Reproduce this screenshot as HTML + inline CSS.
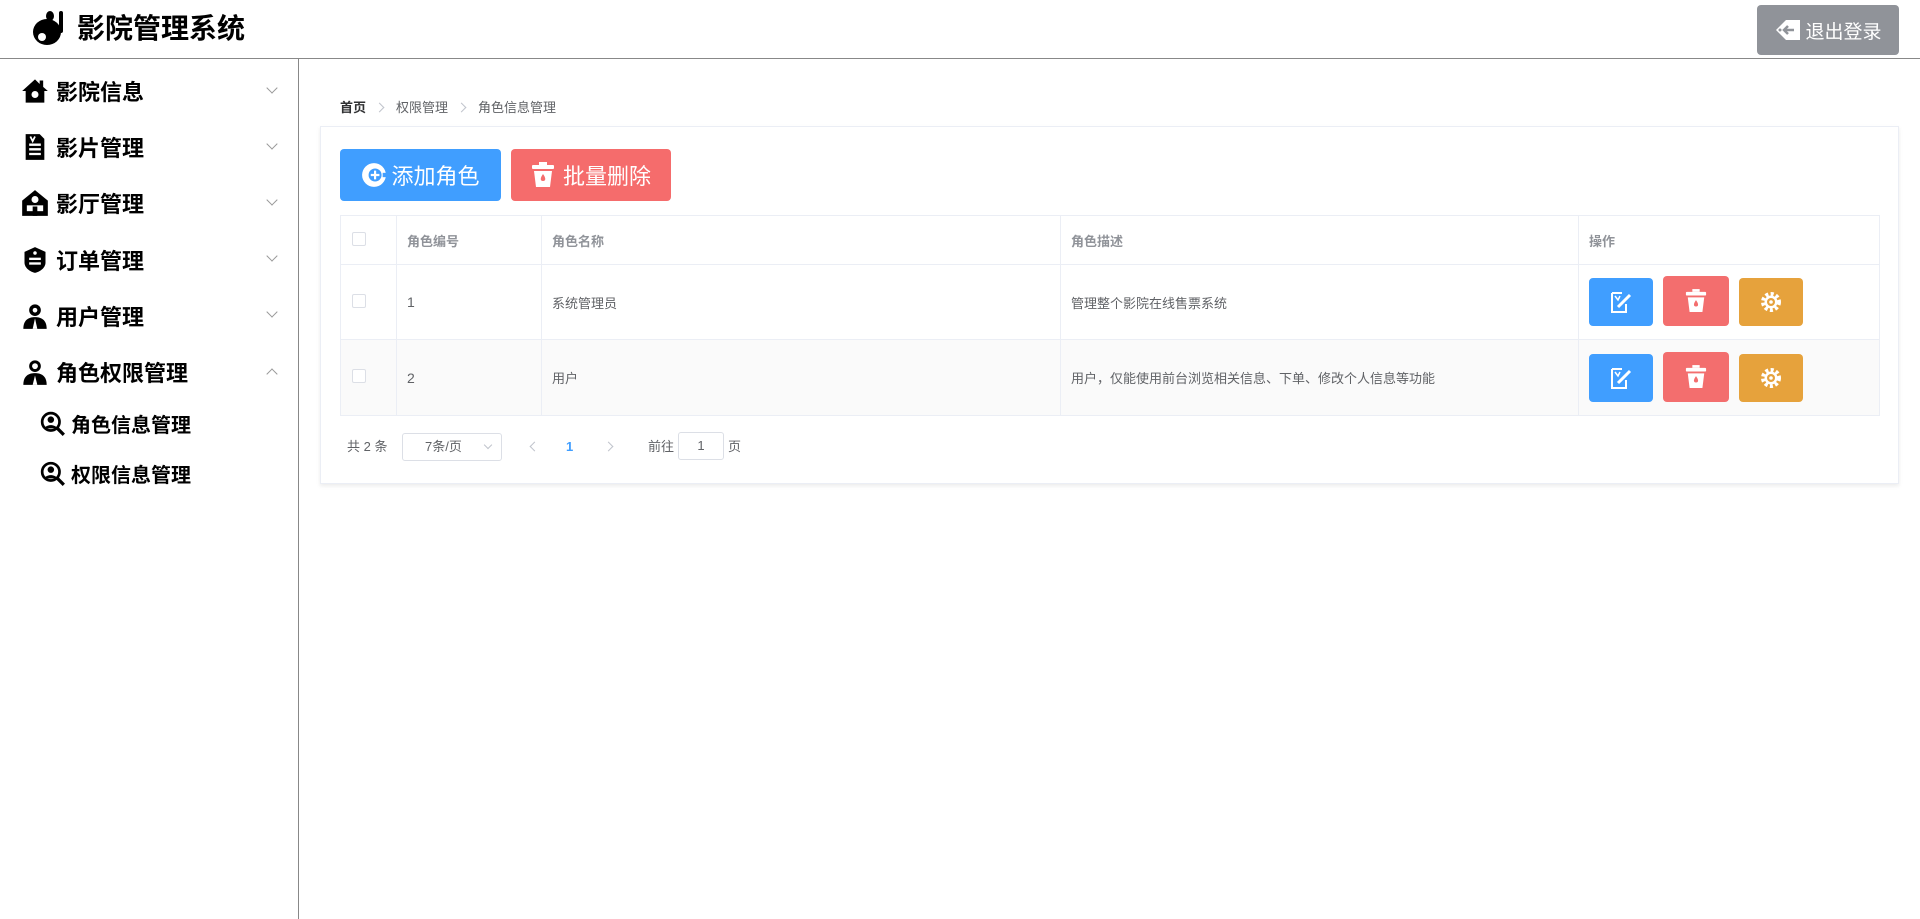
<!DOCTYPE html>
<html><head><meta charset="utf-8"><style>
*{margin:0;padding:0;box-sizing:border-box}
body{width:1920px;height:919px;overflow:hidden;background:#fff;font-family:"Liberation Sans","Noto Sans CJK SC",sans-serif;color:#606266;position:relative}
.abs{position:absolute}
.hdr{left:0;top:0;width:1920px;height:59px;border-bottom:1px solid #888}
.side{left:0;top:59px;width:299px;height:860px;border-right:1px solid #888}
.mi{position:absolute;left:21px;font-size:22px;font-weight:bold;color:#000;display:flex;align-items:center;height:30px}
.mi svg{width:28px;height:28px;margin-right:7px}
.chev{position:absolute;left:268px;width:8px;height:8px;border-right:1px solid #999;border-bottom:1px solid #999;transform:rotate(45deg)}
.si{position:absolute;left:40px;font-size:20px;font-weight:bold;color:#000;display:flex;align-items:center}
.si svg{width:26px;height:26px;margin-right:5px}
.btn{position:absolute;border-radius:4px;color:#fff;display:flex;align-items:center;justify-content:center}
td,th{border-right:1px solid #ebeef5;border-bottom:1px solid #ebeef5}
.cb{display:inline-block;width:14px;height:14px;border:1px solid #dcdfe6;border-radius:2px;background:#fff}
.sep{display:inline-block;width:7px;height:7px;border-right:1px solid #c0c4cc;border-top:1px solid #c0c4cc;transform:rotate(45deg);margin:0 13px 1px 10px}
.ar{position:absolute;width:7px;height:7px;border-left:1.5px solid #c0c4cc;border-bottom:1.5px solid #c0c4cc}
</style></head><body>
<div class="abs hdr">
 <svg class="abs" style="left:31px;top:10px" width="38" height="36" viewBox="0 0 38 36"><ellipse cx="16" cy="22" rx="14" ry="13" fill="#000"/><circle cx="11" cy="27" r="4" fill="#fff"/><ellipse cx="19" cy="6" rx="4" ry="5" fill="#000"/><rect x="28" y="1" width="4" height="22" rx="2" fill="#000"/></svg>
 <div class="abs" style="left:77px;top:10px;font-size:28px;font-weight:bold;color:#000;line-height:38px">影院管理系统</div>
 <div class="btn" style="left:1757px;top:5px;width:142px;height:50px;background:#909399;font-size:19px">
  <svg width="28" height="24" viewBox="0 0 28 24" style="margin-right:3px"><path d="M2 12 L12 2 H26 V22 H12 Z" fill="#fff"/><path d="M20 12 H10 M14 8 L10 12 L14 16" stroke="#909399" stroke-width="2.5" fill="none"/><circle cx="6" cy="12" r="1.5" fill="#909399"/></svg>退出登录</div>
</div>
<div class="abs side">
 <div class="mi" style="top:17px"><svg viewBox="0 0 24 24"><path d="M12 2 L1 12 H4 V22 H20 V12 H23 L19 8.5 V3 H16 V6 Z" fill="#000"/><circle cx="12" cy="15" r="3" fill="#fff"/></svg>影院信息</div><div class="chev" style="top:25px"></div>
 <div class="mi" style="top:73px"><svg viewBox="0 0 24 24"><path d="M4 1 H16 L20 5 V23 H4 Z" fill="#000"/><path d="M7 10 H17 M7 14 H17 M7 18 H17" stroke="#fff" stroke-width="2"/><path d="M8 3 L10 7 L12 3" stroke="#fff" stroke-width="1.5" fill="none"/></svg>影片管理</div><div class="chev" style="top:81px"></div>
 <div class="mi" style="top:129px"><svg viewBox="0 0 24 24"><path d="M12 1 L1 10 V23 H23 V10 Z" fill="#000"/><circle cx="12" cy="9" r="3" fill="#fff"/><rect x="5" y="14" width="14" height="5" fill="#fff"/><rect x="10" y="15" width="4" height="8" fill="#000"/></svg>影厅管理</div><div class="chev" style="top:137px"></div>
 <div class="mi" style="top:186px"><svg viewBox="0 0 24 24"><path d="M12 1 L21 5 V14 C21 19 16 22 12 23 C8 22 3 19 3 14 V5 Z" fill="#000"/><rect x="7" y="10" width="10" height="2" fill="#fff"/><rect x="7" y="14" width="10" height="2" fill="#fff"/><circle cx="12" cy="6" r="1.5" fill="#fff"/></svg>订单管理</div><div class="chev" style="top:193px"></div>
 <div class="mi" style="top:242px"><svg viewBox="0 0 24 24"><circle cx="12" cy="7" r="5" fill="#000"/><circle cx="12" cy="7" r="2" fill="#fff"/><path d="M2 23 C2 15 7 13 12 13 C17 13 22 15 22 23 Z" fill="#000"/><path d="M12 14 L10 23 H14 Z" fill="#fff"/></svg>用户管理</div><div class="chev" style="top:249px"></div>
 <div class="mi" style="top:298px"><svg viewBox="0 0 24 24"><circle cx="12" cy="7" r="5" fill="#000"/><circle cx="12" cy="7" r="2.5" fill="#fff"/><path d="M2 23 C2 15 7 13 12 13 C17 13 22 15 22 23 Z" fill="#000"/><path d="M12 15 L10 23 H14 Z" fill="#fff"/></svg>角色权限管理</div><div class="chev" style="top:311px;transform:rotate(225deg)"></div>
 <div class="si" style="top:350px"><svg viewBox="0 0 24 24"><circle cx="10" cy="10" r="8" fill="none" stroke="#000" stroke-width="2.5"/><circle cx="10" cy="8" r="3" fill="#000"/><path d="M4 16 C6 12 14 12 16 16" fill="#000"/><path d="M16 16 L22 22" stroke="#000" stroke-width="3"/></svg>角色信息管理</div>
 <div class="si" style="top:400px"><svg viewBox="0 0 24 24"><circle cx="10" cy="10" r="8" fill="none" stroke="#000" stroke-width="2.5"/><circle cx="10" cy="8" r="3" fill="#000"/><path d="M4 16 C6 12 14 12 16 16" fill="#000"/><path d="M16 16 L22 22" stroke="#000" stroke-width="3"/></svg>权限信息管理</div>
</div>
<div class="abs" style="left:340px;top:99px;font-size:13px;color:#606266;line-height:18px"><b style="color:#303133">首页</b><span class="sep"></span>权限管理<span class="sep"></span>角色信息管理</div>
<div class="abs" style="left:320px;top:126px;width:1579px;height:358px;border:1px solid #ebeef5;box-shadow:0 2px 4px rgba(0,0,0,.08)"></div>
<div class="btn" style="left:340px;top:149px;width:161px;height:52px;background:#409eff;font-size:22px"><svg width="26" height="26" viewBox="0 0 24 24" style="margin-right:4px"><circle cx="12" cy="12" r="11" fill="#fff"/><circle cx="13" cy="12" r="6" fill="#409eff"/><path d="M13 8 V16 M9 12 H17" stroke="#fff" stroke-width="2"/><rect x="20" y="10" width="4" height="4" fill="#409eff"/></svg>添加角色</div>
<div class="btn" style="left:511px;top:149px;width:160px;height:52px;background:#f56c6c;font-size:22px"><svg width="24" height="26" viewBox="0 0 24 26" style="margin-right:8px"><rect x="8" y="0" width="8" height="3" fill="#fff"/><rect x="1" y="3" width="22" height="4" rx="1" fill="#fff"/><path d="M3 9 H21 L19 25 H5 Z" fill="#fff"/><path d="M12 12 C9 16 9 19 12 19 C15 19 15 16 12 12Z" fill="#f56c6c"/></svg>批量删除</div>
<table class="abs" style="left:340px;top:215px;width:1540px;border-collapse:collapse;border-top:1px solid #ebeef5;border-left:1px solid #ebeef5;font-size:13px">
<tr style="height:49px;color:#909399;text-align:left"><th style="width:56px;padding-left:11px;font-weight:bold"><span class="cb"></span></th><th style="width:145px;padding-left:10px">角色编号</th><th style="width:519px;padding-left:10px">角色名称</th><th style="width:518px;padding-left:10px">角色描述</th><th style="padding-left:10px">操作</th></tr>
<tr style="height:75px"><td style="padding-left:11px"><span class="cb"></span></td><td style="padding-left:10px;font-size:14px">1</td><td style="padding-left:10px">系统管理员</td><td style="padding-left:10px">管理整个影院在线售票系统</td><td></td></tr>
<tr style="height:76px;background:#fafafa"><td style="padding-left:11px"><span class="cb"></span></td><td style="padding-left:10px;font-size:14px">2</td><td style="padding-left:10px">用户</td><td style="padding-left:10px">用户，仅能使用前台浏览相关信息、下单、修改个人信息等功能</td><td></td></tr>
</table>
<div id="ops"></div>
<script>
var h='';[278,354].forEach(function(t){
h+='<div class="btn" style="left:1589px;top:'+t+'px;width:64px;height:48px;background:#409eff"><svg width="24" height="24" viewBox="0 0 24 24"><path d="M3 3 H13 M3 3 V22 H17 V14" stroke="#fff" stroke-width="2" fill="none"/><path d="M9 17 L21 5" stroke="#fff" stroke-width="3"/><path d="M6 6 L9 10 L11 6" stroke="#fff" stroke-width="1.5" fill="none"/></svg></div>';
h+='<div class="btn" style="left:1663px;top:'+(t-2)+'px;width:66px;height:50px;background:#f36e6e"><svg width="22" height="24" viewBox="0 0 24 26"><rect x="8" y="0" width="8" height="3" fill="#fff"/><rect x="1" y="3" width="22" height="4" rx="1" fill="#fff"/><path d="M3 9 H21 L19 25 H5 Z" fill="#fff"/><path d="M12 12 C9 16 9 19 12 19 C15 19 15 16 12 12Z" fill="#f36e6e"/></svg></div>';
h+='<div class="btn" style="left:1739px;top:'+t+'px;width:64px;height:48px;background:#e6a23c"><svg width="24" height="24" viewBox="0 0 24 24"><circle cx="12" cy="12" r="8" fill="none" stroke="#fff" stroke-width="4" stroke-dasharray="3 2.3"/><circle cx="12" cy="12" r="6.5" fill="#fff"/><circle cx="12" cy="12" r="4" fill="#e6a23c"/><circle cx="12" cy="12" r="1.8" fill="#fff"/></svg></div>';
});document.getElementById('ops').innerHTML=h;
</script>
<div class="abs" style="left:347px;top:437px;font-size:13px;line-height:20px">共 2 条</div>
<div class="abs" style="left:402px;top:433px;width:100px;height:28px;border:1px solid #dcdfe6;border-radius:3px;font-size:13px;line-height:26px;padding-left:22px">7条/页<span style="position:absolute;right:10px;top:8px;width:6px;height:6px;border-right:1px solid #c0c4cc;border-bottom:1px solid #c0c4cc;transform:rotate(45deg)"></span></div>
<div class="ar" style="left:531px;top:443px;transform:rotate(45deg)"></div>
<div class="abs" style="left:566px;top:437px;font-size:13px;font-weight:bold;color:#409eff;line-height:20px">1</div>
<div class="ar" style="left:605px;top:443px;transform:rotate(225deg)"></div>
<div class="abs" style="left:648px;top:437px;font-size:13px;line-height:20px">前往</div>
<div class="abs" style="left:678px;top:432px;width:46px;height:28px;border:1px solid #dcdfe6;border-radius:3px;font-size:13px;line-height:26px;text-align:center">1</div>
<div class="abs" style="left:728px;top:437px;font-size:13px;line-height:20px">页</div>
</body></html>
